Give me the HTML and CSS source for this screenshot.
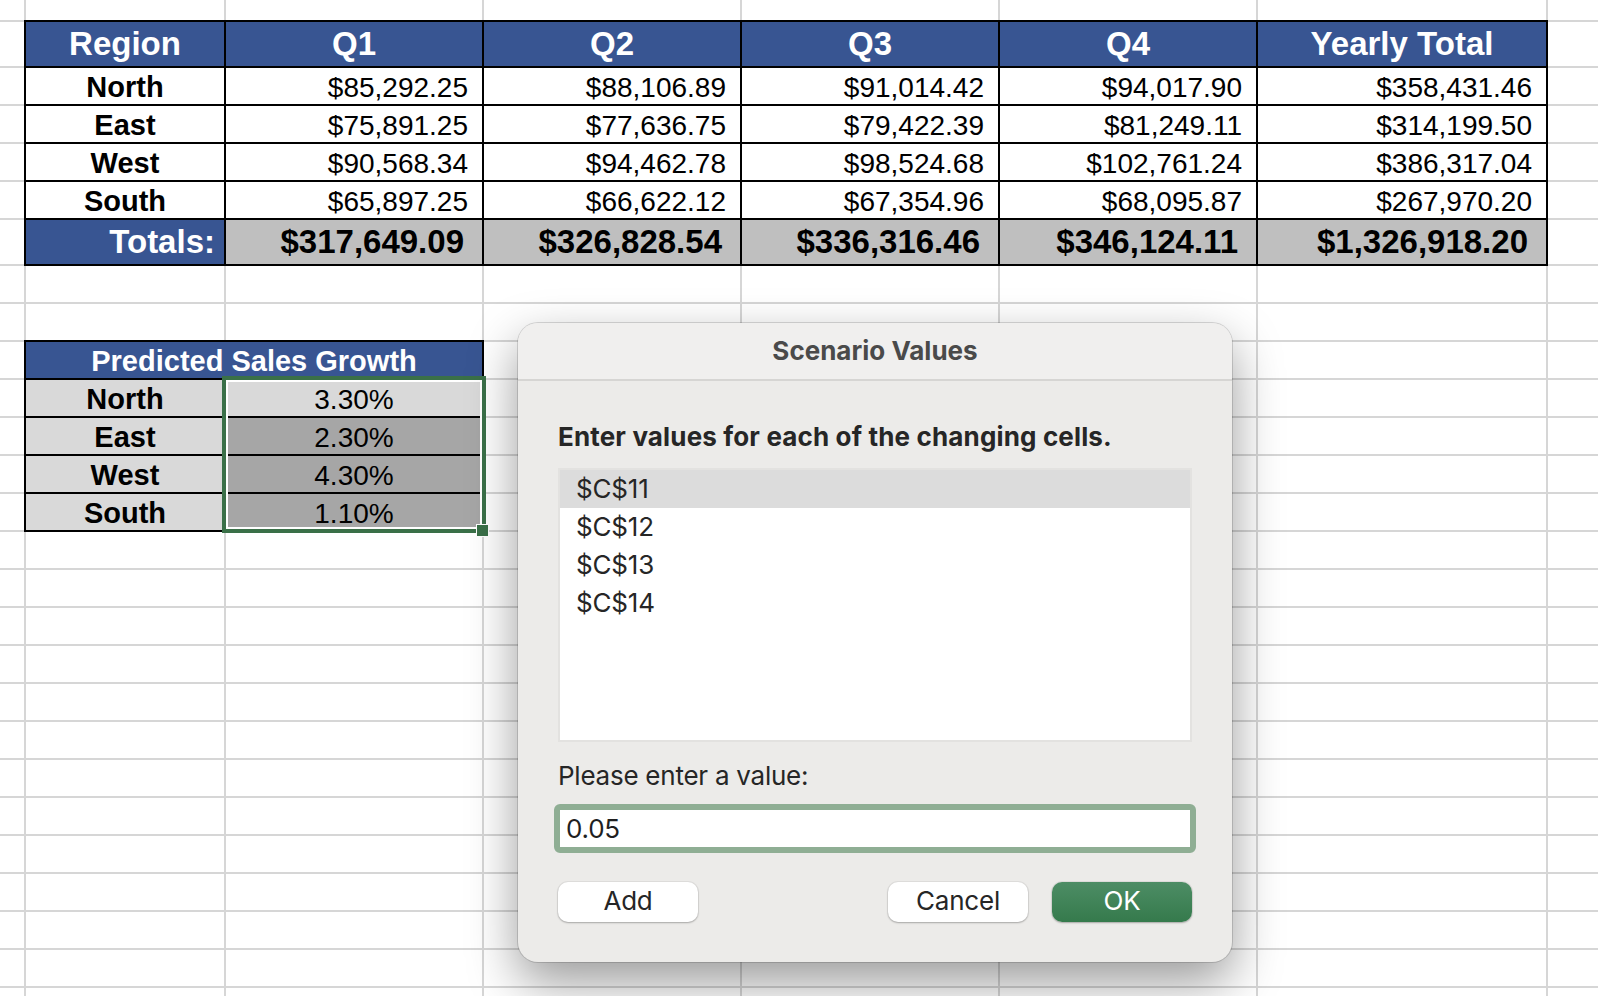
FILE: index.html
```html
<!DOCTYPE html>
<html lang="en">
<head>
<meta charset="utf-8">
<title>Scenario Values</title>
<link rel="stylesheet" href="styles.css">
</head>
<body>
<div class="screen">
  <div class="sheet">
    <div class="row top"></div>
    <div class="row tall">
      <div class="c hd first">Region</div>
      <div class="c hd">Q1</div>
      <div class="c hd">Q2</div>
      <div class="c hd">Q3</div>
      <div class="c hd">Q4</div>
      <div class="c hd">Yearly Total</div>
    </div>
    <div class="row">
      <div class="c lb first">North</div>
      <div class="c v">$85,292.25</div>
      <div class="c v">$88,106.89</div>
      <div class="c v">$91,014.42</div>
      <div class="c v">$94,017.90</div>
      <div class="c v">$358,431.46</div>
    </div>
    <div class="row">
      <div class="c lb first">East</div>
      <div class="c v">$75,891.25</div>
      <div class="c v">$77,636.75</div>
      <div class="c v">$79,422.39</div>
      <div class="c v">$81,249.11</div>
      <div class="c v">$314,199.50</div>
    </div>
    <div class="row">
      <div class="c lb first">West</div>
      <div class="c v">$90,568.34</div>
      <div class="c v">$94,462.78</div>
      <div class="c v">$98,524.68</div>
      <div class="c v">$102,761.24</div>
      <div class="c v">$386,317.04</div>
    </div>
    <div class="row">
      <div class="c lb first">South</div>
      <div class="c v">$65,897.25</div>
      <div class="c v">$66,622.12</div>
      <div class="c v">$67,354.96</div>
      <div class="c v">$68,095.87</div>
      <div class="c v">$267,970.20</div>
    </div>
    <div class="row tall">
      <div class="c tl first">Totals:</div>
      <div class="c tv">$317,649.09</div>
      <div class="c tv">$326,828.54</div>
      <div class="c tv">$336,316.46</div>
      <div class="c tv">$346,124.11</div>
      <div class="c tv">$1,326,918.20</div>
    </div>
    <div class="row"></div>
    <div class="row"></div>
    <div class="row">
      <div class="c ph first">Predicted Sales Growth</div>
    </div>
    <div class="row">
      <div class="c gl first">North</div>
      <div class="c gv active">3.30%</div>
    </div>
    <div class="row">
      <div class="c gl first">East</div>
      <div class="c gv">2.30%</div>
    </div>
    <div class="row">
      <div class="c gl first">West</div>
      <div class="c gv">4.30%</div>
    </div>
    <div class="row">
      <div class="c gl first">South</div>
      <div class="c gv">1.10%</div>
    </div>
    <div class="row"></div>
    <div class="row"></div>
    <div class="row"></div>
    <div class="row"></div>
    <div class="row"></div>
    <div class="row"></div>
    <div class="row"></div>
    <div class="row"></div>
    <div class="row"></div>
    <div class="row"></div>
    <div class="row"></div>
    <div class="row"></div>
    <div class="row"></div>
  </div>

  <div class="selection"></div>
  <div class="handle"></div>

  <div class="dialog">
    <div class="dlg-title">Scenario Values</div>
    <div class="dlg-body">
      <div class="prompt">Enter values for each of the changing cells.</div>
      <div class="list">
        <div class="item sel">$C$11</div>
        <div class="item">$C$12</div>
        <div class="item">$C$13</div>
        <div class="item">$C$14</div>
      </div>
      <div class="label2">Please enter a value:</div>
      <div class="field">0.05</div>
      <div class="buttons">
        <div class="btn">Add</div>
        <div class="btn cancel">Cancel</div>
        <div class="btn ok">OK</div>
      </div>
    </div>
  </div>
</div>
</body>
</html>
```

FILE: styles.css
```css
:root {
  --grid: #d6d6d6;
  --blue: #385592;
  --green: #3a7048;
}

html, body {
  margin: 0;
  padding: 0;
  background: #fff;
}

.screen {
  position: relative;
  width: 1598px;
  height: 996px;
  overflow: hidden;
  background: #fff;
  font-family: "Liberation Sans", Arial, sans-serif;
  color: #000;
}

.sheet {
  display: flex;
  flex-direction: column;
}

.row {
  flex: none;
  display: grid;
  grid-template-columns: 26px 200px 258px 258px 258px 258px 290px 50px;
  height: 38px;
  box-sizing: border-box;
  border-bottom: 2px solid var(--grid);
  background:
    linear-gradient(var(--grid), var(--grid)) 24px 0 / 2px 100% no-repeat,
    linear-gradient(var(--grid), var(--grid)) 224px 0 / 2px 100% no-repeat,
    linear-gradient(var(--grid), var(--grid)) 482px 0 / 2px 100% no-repeat,
    linear-gradient(var(--grid), var(--grid)) 740px 0 / 2px 100% no-repeat,
    linear-gradient(var(--grid), var(--grid)) 998px 0 / 2px 100% no-repeat,
    linear-gradient(var(--grid), var(--grid)) 1256px 0 / 2px 100% no-repeat,
    linear-gradient(var(--grid), var(--grid)) 1546px 0 / 2px 100% no-repeat;
}

.row.top { height: 22px; }
.row.tall { height: 46px; }

/* table cells */
.c {
  margin: -2px 0 -2px -2px;
  border: 2px solid #000;
  display: flex;
  align-items: flex-end;
  line-height: 1;
  padding: 0 0 2px 0;
  white-space: nowrap;
  background: #fff;
}

.c.first { grid-column-start: 2; }

.hd {
  background: var(--blue);
  color: #fff;
  font-size: 33px;
  font-weight: bold;
  justify-content: center;
  padding-bottom: 6px;
}

.lb {
  font-size: 29px;
  font-weight: bold;
  justify-content: center;
}

.v {
  font-size: 28px;
  justify-content: flex-end;
  padding-right: 14px;
}

.tl {
  background: var(--blue);
  color: #fff;
  font-size: 33px;
  font-weight: bold;
  justify-content: flex-end;
  padding-right: 9px;
  padding-bottom: 6px;
}

.tv {
  background: #bfbfbf;
  font-size: 33px;
  font-weight: bold;
  justify-content: flex-end;
  padding-right: 18px;
  padding-bottom: 6px;
}

.ph {
  grid-column: 2 / span 2;
  background: var(--blue);
  color: #fff;
  font-size: 29px;
  font-weight: bold;
  justify-content: center;
}

.gl {
  background: #d9d9d9;
  font-size: 29px;
  font-weight: bold;
  justify-content: center;
}

.gv {
  background: #a6a6a6;
  font-size: 28px;
  justify-content: center;
}

.gv.active { background: #d9d9d9; }

/* selection overlay */
.selection {
  position: absolute;
  left: 222px;
  top: 376px;
  width: 256px;
  height: 149px;
  border: 4px solid var(--green);
  box-shadow: inset 0 0 0 2px #fff;
}

.handle {
  position: absolute;
  left: 476px;
  top: 524px;
  width: 11px;
  height: 11px;
  border: 1px solid #fff;
  background: var(--green);
}

/* dialog */
.dialog {
  position: absolute;
  left: 518px;
  top: 323px;
  width: 714px;
  border-radius: 20px;
  background: #ecebe9;
  box-shadow: 0 0 0 1px rgba(0, 0, 0, 0.14), 0 20px 50px rgba(0, 0, 0, 0.4);
  overflow: hidden;
  font-family: Inter, "Noto Sans", sans-serif;
  color: #262626;
  font-size: 26px;
}

.dlg-title {
  height: 56px;
  line-height: 56px;
  text-align: center;
  font-weight: 700;
  color: #4a4a4a;
  background: #f0efee;
  border-bottom: 2px solid #d6d5d3;
}

.dlg-body {
  padding: 40px;
}

.prompt {
  height: 32px;
  line-height: 32px;
  font-weight: 700;
  letter-spacing: 0.15px;
  white-space: nowrap;
}

.list {
  margin-top: 15px;
  height: 274px;
  box-sizing: border-box;
  border: 2px solid #e3e2e0;
  background: #fff;
}

.item {
  height: 38px;
  line-height: 38px;
  padding-left: 16px;
  letter-spacing: -0.2px;
}

.item.sel { background: #dcdcdc; }

.label2 {
  margin-top: 18px;
  height: 32px;
  line-height: 32px;
  letter-spacing: -0.25px;
}

.field {
  margin: 12px -4px 0;
  height: 49px;
  box-sizing: border-box;
  border: 6px solid #8fae94;
  border-radius: 6px;
  background: #fff;
  padding-left: 6px;
  line-height: 37px;
  color: #1f1f1f;
  letter-spacing: -0.2px;
}

.buttons {
  margin-top: 29px;
  display: flex;
  gap: 24px;
}

.btn {
  width: 140px;
  height: 40px;
  box-sizing: border-box;
  padding-bottom: 3px;
  line-height: 37px;
  text-align: center;
  border-radius: 10px;
  background: #fff;
  letter-spacing: -0.2px;
  box-shadow: 0 1px 2px rgba(0, 0, 0, 0.25), 0 0 0 1px rgba(0, 0, 0, 0.05);
}

.btn.cancel { margin-left: auto; }

.btn.ok {
  background: linear-gradient(#4d8d65, #357a4c);
  color: #fff;
}
```
